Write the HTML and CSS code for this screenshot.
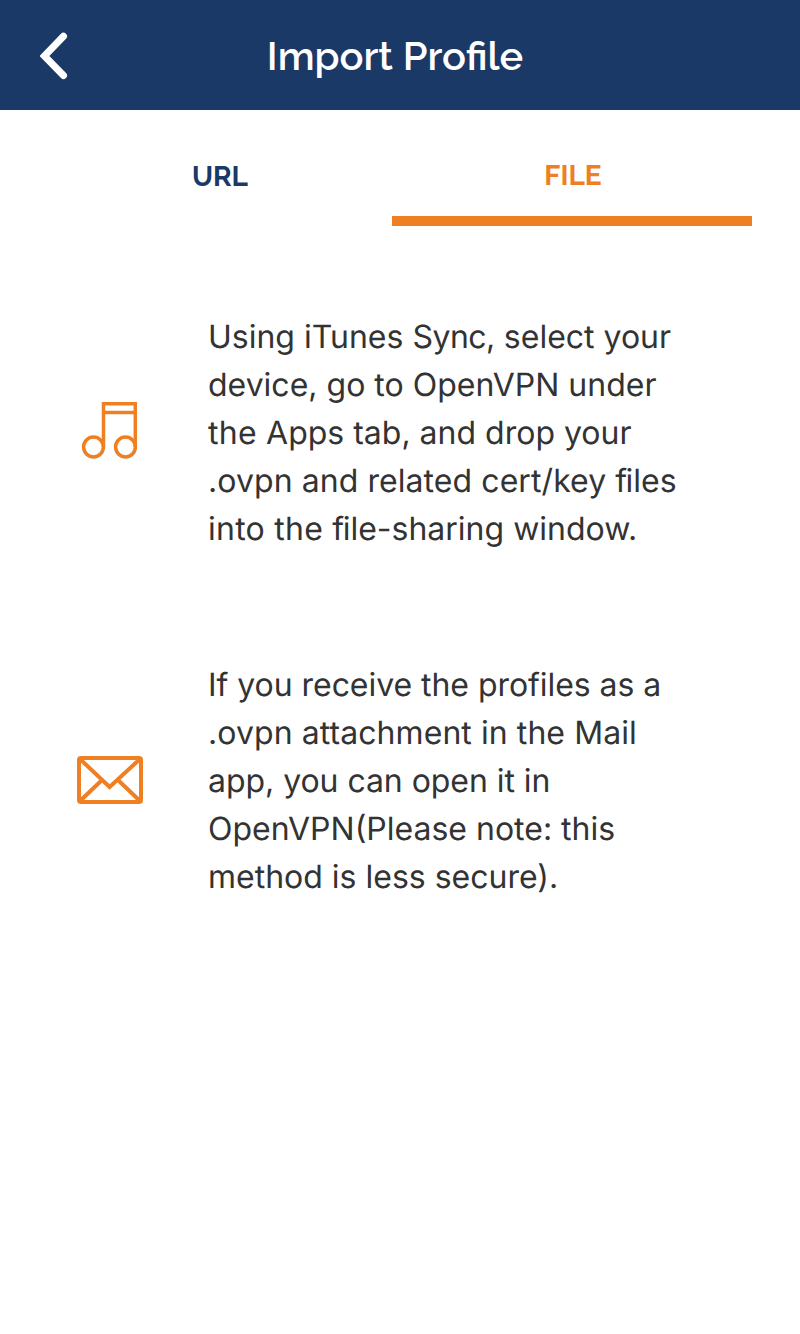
FILE: index.html
```html
<!DOCTYPE html>
<html lang="en">
<head>
<meta charset="utf-8">
<title>Import Profile</title>
<link rel="stylesheet" href="styles.css">
</head>
<body>
<header class="topbar">
  <button class="back" aria-label="Back"><svg width="28" height="48" viewBox="0 0 28 48"><path d="M23.500 4.300 4.400 24 23.500 43.500"/></svg></button>
  <h1 class="title">Import Profile</h1>
</header>
<nav class="tabs">
  <a class="tab">URL</a>
  <a class="tab active">FILE</a>
</nav>
<main class="options">
  <section class="option">
    <svg class="icon music" width="68" height="68" viewBox="0 0 68 68"><circle cx="17.500" cy="48" r="9.900"/><circle cx="49.500" cy="48" r="9.900"/><path d="M27.500 48V4.800H59.300V48M27.500 13.500H59.300"/></svg>
    <p class="text">Using iTunes <span class="snug">Sync,</span> select your<br>device, go to OpenVPN under<br><span class="wide">the </span>Apps tab, and drop your<br><span class="loose">.ovpn and related cert/key </span><span class="fi">f</span>iles<br><span class="wide">into the </span><span class="fi">f</span>ile-sharing window.</p>
  </section>
  <section class="option">
    <svg class="icon" width="68" height="50" viewBox="0 0 68 50"><rect x="3" y="2" width="62" height="44" rx="2"/><path d="M4 3 33.600 31 64 3M4 45 25.500 24.500M64 45 42.500 24.500"/></svg>
    <p class="text"><span class="close">If you receive the profiles as a</span><br><span class="loose">.ovpn attachment in the Mail</span><br><span class="close">app, you can open it in</span><br>OpenVPN(Please note: this<br>method is less secure).</p>
  </section>
</main>
</body>
</html>
```
FILE: styles.css
```css
body { margin: 0; min-height: 1334px; background: #fff; font-family: Inter, sans-serif; }
.topbar { display: grid; grid-template-columns: 105px 580px 105px; height: 110px; background: #1b3967; align-items: center; }
.back { border: 0; padding: 2px 0 0 40px; background: none; display: flex; }
.back svg { fill: none; stroke: #fff; stroke-width: 7; stroke-linecap: round; }
.title { margin: 0; padding-top: 2px; text-align: center; color: #fff; font: 600 39.8px/48px Raleway, Lato, sans-serif; }
.tabs { display: grid; grid-template-columns: 344px 360px; padding-left: 48px; height: 116px; }
.tab { box-sizing: border-box; text-align: center; padding-top: 50px; color: #1b3967; font: 700 28px/34px Raleway, Lato, sans-serif; }
.active { padding-top: 49px; padding-left: 2px; color: #ee7f22; border-bottom: 10px solid #ee7f22; }
.options { display: flex; flex-direction: column; gap: 108px; padding: 87px 0 0 76px; }
.option { display: grid; grid-template-columns: 132px 1fr; align-items: center; }
.icon { fill: none; stroke: #ee7f22; stroke-width: 4; }
.music { stroke-width: 3.5; }
.text { margin: 0; color: #333; font: 400 32px/48px Inter, sans-serif; white-space: nowrap; text-rendering: geometricPrecision; }
.snug { letter-spacing: -0.5px; }
.close { letter-spacing: -0.05px; }
.loose { letter-spacing: 0.07px; }
.wide { letter-spacing: 0.25px; }
.fi { letter-spacing: -1.5px; }
```
